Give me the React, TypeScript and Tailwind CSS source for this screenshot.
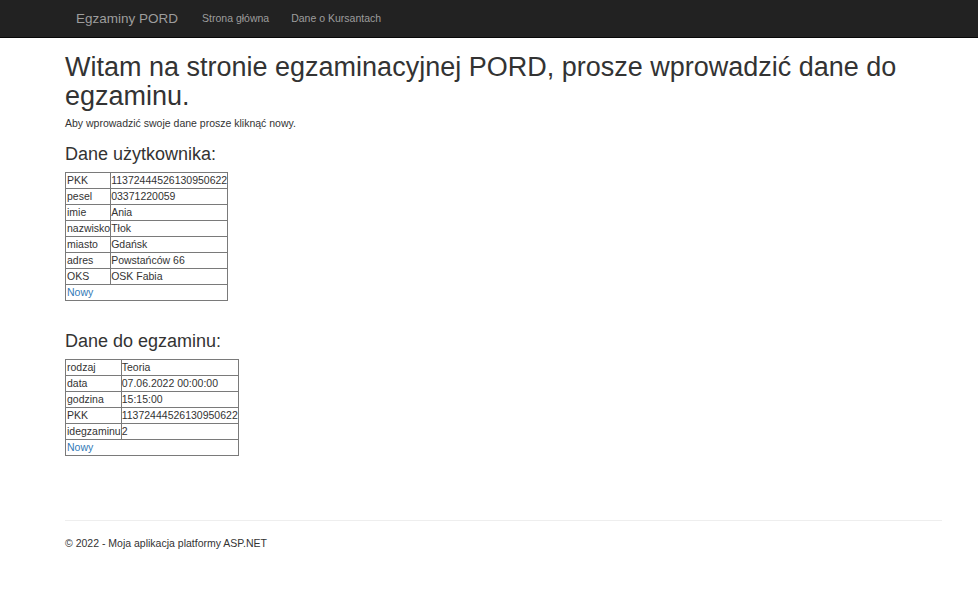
import React from "react"

const user: [string, string][] = [
  ["PKK", "11372444526130950622"],
  ["pesel", "03371220059"],
  ["imie", "Ania"],
  ["nazwisko", "Tłok"],
  ["miasto", "Gdańsk"],
  ["adres", "Powstańców 66"],
  ["OKS", "OSK Fabia"],
]

const exam: [string, string][] = [
  ["rodzaj", "Teoria"],
  ["data", "07.06.2022 00:00:00"],
  ["godzina", "15:15:00"],
  ["PKK", "11372444526130950622"],
  ["idegzaminu", "2"],
]

function DataTable({ rows }: { rows: [string, string][] }) {
  return (
    <table className="border-collapse border border-[#7a7a7a]">
      <tbody>
        {rows.map(([k, v]) => (
          <tr key={k}>
            <td className="border border-[#7a7a7a] pl-px leading-[15px] whitespace-nowrap">{k}</td>
            <td className="border border-[#7a7a7a] leading-[15px] whitespace-nowrap">{v}</td>
          </tr>
        ))}
        <tr>
          <td colSpan={2} className="border border-[#7a7a7a] pl-px leading-[15px]">
            <a href="#" className="text-[#337ab7]">Nowy</a>
          </td>
        </tr>
      </tbody>
    </table>
  )
}

export default function App() {
  return (
    <div className="min-h-screen bg-white text-[#333] text-[10.5px] leading-[15px] font-['Liberation_Sans',Arial,sans-serif]">
      <div className="bg-[#222] border-b border-[#080808] h-[38px]">
        <div className="pl-[65px] pr-[36px] flex items-center h-[37px]">
          <a href="#" className="px-[11px] text-[13.5px] text-[#9d9d9d]">Egzaminy PORD</a>
          <a href="#" className="ml-[2px] px-[11px] text-[#9d9d9d]">Strona główna</a>
          <a href="#" className="px-[11px] text-[#9d9d9d]">Dane o Kursantach</a>
        </div>
      </div>

      <div className="pl-[65px] pr-[36px]">
        <h1 className="mt-[15px] mb-[5px] text-[27px] leading-[29px] pr-[40px]">
          Witam na stronie egzaminacyjnej PORD, prosze wprowadzić dane do egzaminu.
        </h1>
        <p>Aby wprowadzić swoje dane prosze kliknąć nowy.</p>

        <h3 className="mt-[13px] mb-[8px] text-[18px] leading-[20px]">Dane użytkownika:</h3>
        <DataTable rows={user} />

        <h3 className="mt-[30px] mb-[8px] text-[18px] leading-[20px]">Dane do egzaminu:</h3>
        <DataTable rows={exam} />

        <hr className="mt-[64px] mb-[15px] border-t border-[#eee]" />
        <footer>
          <p>© 2022 - Moja aplikacja platformy ASP.NET</p>
        </footer>
      </div>
    </div>
  )
}
